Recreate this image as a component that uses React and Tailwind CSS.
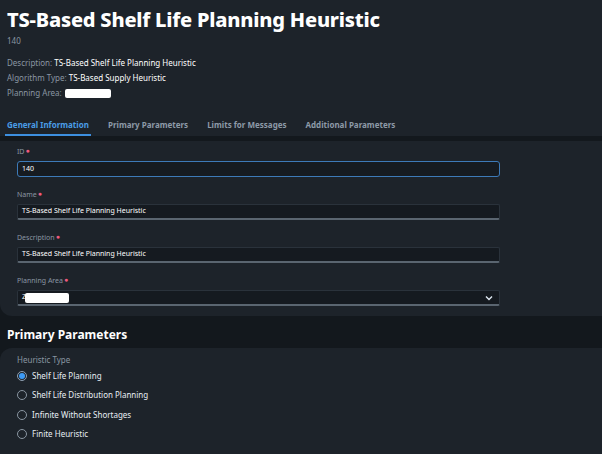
import React from "react";

const font = { fontFamily: '"Noto Sans", "Open Sans", Arial, sans-serif' };

function Label({ children }) {
  return (
    <div className="flex items-center h-[10px] text-[7px] leading-[10px] text-[#8a96a2]">
      <span>{children}</span>
      <span className="ml-[1px] mt-[-3px] text-[#f05a7e] text-[7px] leading-[7px]">●</span>
    </div>
  );
}

function Field({ label, children, focus, select, className }) {
  return (
    <div className={className}>
      <Label>{label}</Label>
      <div
        className={
          focus
            ? "mt-[4px] h-[16px] w-[483px] rounded-[3px] border border-[#3d7ab8] bg-[#161b21] px-[4px] flex items-center"
            : "mt-[4px] h-[16px] w-[483px] rounded-[2px] border border-[#2a323b] border-b-[#5a6570] border-b-2 bg-[#151a20] px-[4px] flex items-center"
        }
      >
        <div className="flex-1 flex items-center text-[7px] text-white">{children}</div>
        {select && (
          <svg width="8" height="6" viewBox="0 0 8 6" className="mr-[2px]">
            <path d="M1 1.5 L4 4.5 L7 1.5" stroke="#dfe8f2" strokeWidth="1.4" fill="none" />
          </svg>
        )}
      </div>
    </div>
  );
}

function Radio({ checked, children }) {
  return (
    <div className="flex items-center h-[19.5px]">
      <div
        className={
          checked
            ? "w-[10px] h-[10px] rounded-full border border-[#8fa0b2] flex items-center justify-center"
            : "w-[10px] h-[10px] rounded-full border border-[#8a96a2]"
        }
      >
        {checked && <div className="w-[6px] h-[6px] rounded-full bg-[#3d9af5]" />}
      </div>
      <span className="ml-[5px] text-[8px] text-[#e8eef4]">{children}</span>
    </div>
  );
}

export default function App() {
  return (
    <div style={font} className="w-[602px] h-[454px] overflow-hidden bg-[#13181d]">
      {/* Header */}
      <div className="bg-[#1d232a] pt-[6px]">
        <div className="px-[7px]">
          <div className="text-[20px] leading-[28px] font-extrabold text-white tracking-[-0.2px]">
            TS-Based Shelf Life Planning Heuristic
          </div>
          <div className="mt-[2px] text-[8px] leading-[10px] text-[#8a96a2]">140</div>
          <div className="mt-[12px] flex flex-col gap-[5px] text-[8px] leading-[10px]">
            <div>
              <span className="text-[#8a96a2]">Description: </span>
              <span className="text-white">TS-Based Shelf Life Planning Heuristic</span>
            </div>
            <div>
              <span className="text-[#8a96a2]">Algorithm Type: </span>
              <span className="text-white">TS-Based Supply Heuristic</span>
            </div>
            <div className="flex items-center">
              <span className="text-[#8a96a2]">Planning Area:</span>
              <span className="ml-[3px] inline-block h-[9px] w-[46px] rounded-[2px] bg-white" />
            </div>
          </div>
        </div>
        <div className="mt-[20px] flex text-[8px] font-bold text-[#8d9aa8] h-[18px]">
          <div className="ml-[5px] w-[86px] flex justify-center border-b-2 border-[#3d8fe0] text-[#4a9de8]">
            <span className="pt-[1px]">General Information</span>
          </div>
          <div className="ml-[17px] pt-[1px]">Primary Parameters</div>
          <div className="ml-[19px] pt-[1px]">Limits for Messages</div>
          <div className="ml-[19px] pt-[1px]">Additional Parameters</div>
        </div>
      </div>

      {/* Form card */}
      <div className="mt-[5px] bg-[#1d232a] rounded-bl-[12px] pl-[17px] pt-[6px] pb-[10px]">
        <Field label="ID" focus>
          <span>140</span>
        </Field>
        <Field label="Name" className="mt-[13px]">
          <span>TS-Based Shelf Life Planning Heuristic</span>
        </Field>
        <Field label="Description" className="mt-[13px]">
          <span>TS-Based Shelf Life Planning Heuristic</span>
        </Field>
        <Field label="Planning Area" select className="mt-[13px]">
          <span>Z</span>
          <span className="ml-[-1px] inline-block h-[10px] w-[44px] rounded-[2px] bg-white" />
        </Field>
      </div>

      {/* Primary Parameters */}
      <div className="px-[7px] pt-[11px] pb-[5px] text-[12px] leading-[16px] font-bold text-white">
        Primary Parameters
      </div>
      <div className="bg-[#1d232a] rounded-tl-[12px] h-[120px] pl-[17px] pt-[7px]">
        <div className="text-[8px] leading-[10px] text-[#8a96a2]">Heuristic Type</div>
        <div className="mt-[1px] flex flex-col">
          <Radio checked>Shelf Life Planning</Radio>
          <Radio>Shelf Life Distribution Planning</Radio>
          <Radio>Infinite Without Shortages</Radio>
          <Radio>Finite Heuristic</Radio>
        </div>
      </div>
    </div>
  );
}
